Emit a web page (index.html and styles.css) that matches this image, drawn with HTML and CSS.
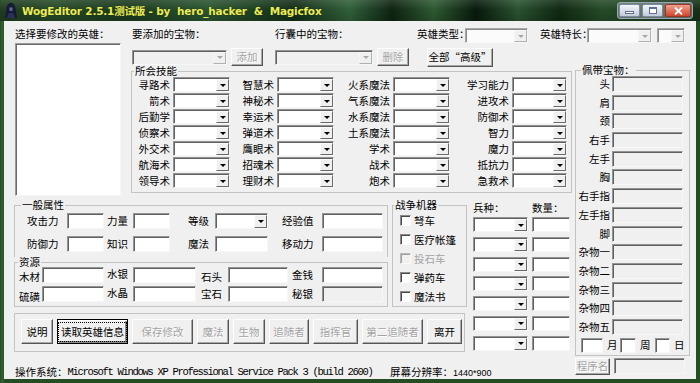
FILE: index.html
```html
<!DOCTYPE html>
<html lang="zh-CN">
<head>
<meta charset="utf-8">
<title>WogEditor</title>
<link rel="stylesheet" href="styles.css">
</head>
<body>
<div class="window">
  <div class="titlebar">
    <svg class="appicon" width="16" height="17" viewBox="0 0 16 17">
      <path d="M8 1C5.2 1 3.6 3.6 3.4 7.2L2 16h12l-1.4-8.8C12.4 3.6 10.8 1 8 1z" fill="#161a34"/>
      <path d="M6.2 5.5h3.6l-.4 3.4H6.6z" fill="#5d6690"/>
      <path d="M4 16l1.5-5h5l1.5 5z" fill="#2a3058"/>
    </svg>
    <span class="title">WogEditor 2.5.1测试版 - by  hero_hacker  &amp;  Magicfox</span>
    <div class="capbtns">
      <span class="cap"><span class="ico-min"></span></span>
      <span class="cap"><span class="ico-max"></span></span>
      <span class="cap close">
        <svg width="9" height="8" viewBox="0 0 9 8"><path d="M1 0.5l7 7M8 0.5l-7 7" stroke="#fff" stroke-width="1.8"/></svg>
      </span>
    </div>
  </div>

  <div class="client">
    <div class="row1">
      <span class="lab l1">选择要修改的英雄：</span>
      <span class="lab l2">要添加的宝物：</span>
      <span class="lab l3">行囊中的宝物：</span>
      <span class="lab l4">英雄类型：</span>
      <div class="cb off w63"><i></i></div>
      <span class="lab l5">英雄特长：</span>
      <div class="cb off w65"><i></i></div>
      <div class="cb off w28 ml5"><i></i></div>
    </div>

    <div class="main">
      <div class="leftreg">
        <div class="upper">
          <div class="listbox"></div>
          <div class="center">
            <div class="addrow">
              <div class="cb dis w95 ml1"><i></i></div>
              <span class="btn dis w32 ml4 h18">添加</span>
              <div class="cb dis w98 ml12"><i></i></div>
              <span class="btn dis w32 ml4 h18">删除</span>
              <span class="btn w66 ml18 h19">全部“高级”</span>
            </div>
            <fieldset class="grp skills">
              <legend class="lg-skills">所会技能</legend>
              <div class="skillgrid">
                <span class="sl">寻路术</span><div class="cb"><i></i></div>
                <span class="sl">智慧术</span><div class="cb"><i></i></div>
                <span class="sl">火系魔法</span><div class="cb"><i></i></div>
                <span class="sl">学习能力</span><div class="cb"><i></i></div>

                <span class="sl">箭术</span><div class="cb"><i></i></div>
                <span class="sl">神秘术</span><div class="cb"><i></i></div>
                <span class="sl">气系魔法</span><div class="cb"><i></i></div>
                <span class="sl">进攻术</span><div class="cb"><i></i></div>

                <span class="sl">后勤学</span><div class="cb"><i></i></div>
                <span class="sl">幸运术</span><div class="cb"><i></i></div>
                <span class="sl">水系魔法</span><div class="cb"><i></i></div>
                <span class="sl">防御术</span><div class="cb"><i></i></div>

                <span class="sl">侦察术</span><div class="cb"><i></i></div>
                <span class="sl">弹道术</span><div class="cb"><i></i></div>
                <span class="sl">土系魔法</span><div class="cb"><i></i></div>
                <span class="sl">智力</span><div class="cb"><i></i></div>

                <span class="sl">外交术</span><div class="cb"><i></i></div>
                <span class="sl">鹰眼术</span><div class="cb"><i></i></div>
                <span class="sl">学术</span><div class="cb"><i></i></div>
                <span class="sl">魔力</span><div class="cb"><i></i></div>

                <span class="sl">航海术</span><div class="cb"><i></i></div>
                <span class="sl">招魂术</span><div class="cb"><i></i></div>
                <span class="sl">战术</span><div class="cb"><i></i></div>
                <span class="sl">抵抗力</span><div class="cb"><i></i></div>

                <span class="sl">领导术</span><div class="cb"><i></i></div>
                <span class="sl">理财术</span><div class="cb"><i></i></div>
                <span class="sl">炮术</span><div class="cb"><i></i></div>
                <span class="sl">急救术</span><div class="cb"><i></i></div>
              </div>
            </fieldset>
          </div>
        </div>

        <div class="lower">
          <div class="genres">
            <fieldset class="grp general">
              <legend class="lg-gen">一般属性</legend>
              <div class="gengrid">
                <span class="gl">攻击力</span><div class="tb"></div>
                <span class="gl p3">力量</span><div class="tb"></div>
                <span class="gl p18">等级</span><div class="cb h16"><i></i></div>
                <span class="gl p14">经验值</span><div class="tb"></div>

                <span class="gl">防御力</span><div class="tb"></div>
                <span class="gl p3">知识</span><div class="tb"></div>
                <span class="gl p18">魔法</span><div class="tb"></div>
                <span class="gl p14">移动力</span><div class="tb"></div>
              </div>
            </fieldset>
            <fieldset class="grp res">
              <legend class="lg-res">资源</legend>
              <div class="resgrid">
                <span class="rl first">木材</span><div class="tb"></div>
                <span class="rl p3 top">水银</span><div class="tb"></div>
                <span class="rl p5 low">石头</span><div class="tb"></div>
                <span class="rl p4">金钱</span><div class="tb"></div>

                <span class="rl bot">硫磺</span><div class="tb"></div>
                <span class="rl p3 top">水晶</span><div class="tb"></div>
                <span class="rl p5">宝石</span><div class="tb"></div>
                <span class="rl p4">秘银</span><div class="tb ro"></div>
              </div>
            </fieldset>
          </div>

          <fieldset class="grp war">
            <legend class="lg-war">战争机器</legend>
            <div class="warlist">
              <div class="wrow"><span class="chk"></span><span class="wl">弩车</span></div>
              <div class="wrow"><span class="chk"></span><span class="wl">医疗帐篷</span></div>
              <div class="wrow dis"><span class="chk"></span><span class="wl">投石车</span></div>
              <div class="wrow"><span class="chk"></span><span class="wl">弹药车</span></div>
              <div class="wrow"><span class="chk"></span><span class="wl">魔法书</span></div>
            </div>
          </fieldset>

          <div class="troops">
            <div class="thead"><span class="th1">兵种：</span><span>数量：</span></div>
            <div class="tgrid">
              <div class="cb"><i></i></div><div class="tb"></div>
              <div class="cb"><i></i></div><div class="tb"></div>
              <div class="cb"><i></i></div><div class="tb"></div>
              <div class="cb"><i></i></div><div class="tb"></div>
              <div class="cb"><i></i></div><div class="tb"></div>
              <div class="cb"><i></i></div><div class="tb"></div>
              <div class="cb"><i></i></div><div class="tb"></div>
            </div>
          </div>

          <div class="btnbox">
            <span class="btn bb w32">说明</span>
            <span class="btn bb def w71"><span class="focus">读取英雄信息</span></span>
            <span class="btn bb dis w61">保存修改</span>
            <span class="btn bb dis w32">魔法</span>
            <span class="btn bb dis w32">生物</span>
            <span class="btn bb dis w40">追随者</span>
            <span class="btn bb dis w45">指挥官</span>
            <span class="btn bb dis w61">第二追随者</span>
            <span class="btn bb w35">离开</span>
          </div>
        </div>

        <div class="status">
          <span class="os"><span>操作系统：</span><span class="mono">Microsoft Windows XP Professional Service Pack 3 (build 2600)</span></span>
          <span class="scr">屏幕分辨率：<span class="num">1440*900</span></span>
        </div>
      </div>

      <div class="rightreg">
        <fieldset class="grp equip">
          <legend class="lg-eq">佩带宝物：</legend>
          <div class="eqgrid">
            <span class="el">头</span><div class="tb ro"></div>
            <span class="el">肩</span><div class="tb ro"></div>
            <span class="el">颈</span><div class="tb ro"></div>
            <span class="el">右手</span><div class="tb ro"></div>
            <span class="el">左手</span><div class="tb ro"></div>
            <span class="el">胸</span><div class="tb ro"></div>
            <span class="el">右手指</span><div class="tb ro"></div>
            <span class="el">左手指</span><div class="tb ro"></div>
            <span class="el">脚</span><div class="tb ro"></div>
            <span class="el">杂物一</span><div class="tb ro"></div>
            <span class="el">杂物二</span><div class="tb ro"></div>
            <span class="el">杂物三</span><div class="tb ro"></div>
            <span class="el">杂物四</span><div class="tb ro"></div>
            <span class="el">杂物五</span><div class="tb ro"></div>
          </div>
          <div class="daterow">
            <div class="tb d1"></div><span class="dl">月</span>
            <div class="tb d2"></div><span class="dl">周</span>
            <div class="tb d3"></div><span class="dl">日</span>
          </div>
        </fieldset>
        <div class="progrow">
          <span class="btn dis prog">程序名</span>
          <div class="tb ro progtb"></div>
        </div>
      </div>
    </div>
  </div>
</div>
</body>
</html>
```
FILE: styles.css
```css
* { box-sizing: border-box; }
body {
  margin: 0;
  background: #ffffff;
  font-family: "Noto Sans CJK SC", "Noto Sans", sans-serif;
  font-size: 10.5px;
  line-height: 12px;
  color: #000;
}
.window {
  width: 700px;
  height: 383px;
  display: flex;
  flex-direction: column;
  background: linear-gradient(90deg, #244d24, #356535 3px, #244d24 4px);
  overflow: hidden;
}

/* ---------- title bar ---------- */
.titlebar {
  height: 21px;
  flex: none;
  display: flex;
  align-items: center;
  background:
    linear-gradient(180deg, rgba(255,255,255,0.12), rgba(255,255,255,0) 45%, rgba(0,0,0,0.15)),
    linear-gradient(90deg, #203c20 0%, #264a27 8%, #1c3a1f 18%, #2a5530 30%, #142e18 42%, #31603a 50%, #0e2412 56%, #2e5a32 62%, #081a0c 68%, #2a5230 74%, #0f2812 80%, #264c28 86%, #163018 100%);
  border-radius: 5px 5px 0 0;
}
.appicon { margin-left: 3px; flex: none; }
.title {
  margin-left: 3px;
  white-space: pre;
  color: #ecec58;
  font-family: "DejaVu Sans", "Noto Sans CJK SC", sans-serif;
  font-weight: bold;
  font-size: 10.5px;
  letter-spacing: -0.2px;
  text-shadow: 0 0 1px #1a2a10;
}
.capbtns {
  margin-left: auto;
  margin-right: 7px;
  display: flex;
  gap: 2px;
  padding: 1px;
  border: 1px solid #9aa6b8;
  border-radius: 3px;
  background: rgba(220,226,236,0.35);
}
.cap {
  width: 21px;
  height: 13px;
  border: 1px solid #7c8aa4;
  border-radius: 2px;
  background: linear-gradient(#f3f5f9, #c3cbd9);
  display: flex;
  align-items: center;
  justify-content: center;
}
.cap.close {
  width: 26px;
  border-color: #9c3424;
  background: linear-gradient(#f2a08e, #d0462e);
}
.ico-min { width: 9px; height: 3px; border: 1px solid #5f6f90; margin-top: 4px; background: #fff; }
.ico-max { width: 8px; height: 7px; border: 1px solid #5f6f90; border-top-width: 2px; background: #fff; }

/* ---------- client ---------- */
.client {
  flex: 1;
  margin: 0 4px 4px;
  background: #f0f0f0;
  padding: 7px 0 0 10px;
  display: flex;
  flex-direction: column;
}
.row1 { display: flex; height: 15px; padding-left: 1px; }
.row1 .lab { white-space: nowrap; flex: none; }
.l1 { width: 117px; }
.l2 { width: 143px; }
.l3 { width: 142px; }
.l4 { width: 48px; }
.l5 { width: 47px; margin-left: 12px; }

.main { display: grid; grid-template-columns: 558px 115px; column-gap: 3px; }
.leftreg { display: flex; flex-direction: column; }
.upper { display: flex; }
.listbox {
  margin-left: 1px;
  width: 106px;
  height: 153px;
  background: #fff;
  border: 1px solid;
  border-color: #9a9a9a #f6f6f6 #f6f6f6 #9a9a9a;
  box-shadow: inset 1px 1px 0 #6a6a6a;
}
.center { margin-left: 10px; width: 441px; display: flex; flex-direction: column; }
.addrow { display: flex; align-items: center; margin-top: 5px; height: 18px; }

/* ---------- controls ---------- */
.cb {
  height: 15px;
  background: #fff;
  border: 1px solid;
  border-color: #949494 #f7f7f7 #f7f7f7 #949494;
  box-shadow: inset 1px 1px 0 #606060;
  display: flex;
  justify-content: flex-end;
  padding: 1px 0 0 1px;
  flex: none;
}
.cb i {
  width: 13px;
  height: 100%;
  background: #f0f0f0;
  border: 1px solid;
  border-color: #fbfbfb #6a6a6a #6a6a6a #fbfbfb;
  display: flex;
  align-items: center;
  justify-content: center;
}
.cb i::after {
  content: "";
  border-left: 3px solid transparent;
  border-right: 3px solid transparent;
  border-top: 3px solid #000;
}
.cb.dis { background: #f0f0f0; }
.cb.dis i, .cb.off i { border-color: #f6f6f6 #b0b0b0 #b0b0b0 #f6f6f6; }
.cb.dis i::after, .cb.off i::after { border-top-color: #a8a8a8; }
.cb.off { background: #fbfbfb; border-color: #a8a8a8 #f7f7f7 #f7f7f7 #a8a8a8; box-shadow: inset 1px 1px 0 #8a8a8a; }
.cb.h16 { height: 16px; }

.tb {
  height: 16px;
  background: #fff;
  border: 1px solid;
  border-color: #949494 #f7f7f7 #f7f7f7 #949494;
  box-shadow: inset 1px 1px 0 #606060;
}
.tb.ro { background: #f0f0f0; }

.btn {
  height: 18px;
  background: #f0f0f0;
  border: 1px solid;
  border-color: #fdfdfd #555 #555 #fdfdfd;
  box-shadow: inset -1px -1px 0 #a8a8a8;
  display: flex;
  align-items: center;
  justify-content: center;
  white-space: nowrap;
  flex: none;
}
.btn.dis { color: #a4a4a4; text-shadow: 1px 1px 0 #fff; }
.btn.def {
  border-color: #000;
  box-shadow: inset 1px 1px 0 #fdfdfd, inset -2px -2px 0 #8a8a8a;
}
.btn .focus { border: 1px dotted #000; padding: 3px 2px; line-height: 12px; }

.w28 { width: 28px; } .w32 { width: 32px; } .w35 { width: 35px; } .w40 { width: 40px; }
.w45 { width: 45px; } .w61 { width: 61px; } .w63 { width: 63px; } .w65 { width: 65px; }
.w66 { width: 66px; } .w71 { width: 71px; } .w95 { width: 95px; } .w98 { width: 98px; }
.ml1 { margin-left: 1px; } .ml4 { margin-left: 4px; } .ml5 { margin-left: 5px; }
.ml12 { margin-left: 12px; } .ml18 { margin-left: 18px; }
.h18 { height: 18px; } .h19 { height: 19px; }

/* ---------- group boxes ---------- */
.grp {
  margin: 0;
  padding: 0;
  min-width: 0;
  border: 1px solid #c3c3c3;
}
.grp legend { padding: 0 1px; line-height: 12px; }
.lg-skills { margin-left: 2px; }
.lg-gen { margin-left: 6px; }
.grp .lg-res { margin-left: 3px; line-height: 10px; }
.lg-war { margin-left: 1px; }
.lg-eq { margin-left: 5px; }

.skills { margin-top: -1px; width: 441px; padding-bottom: 4px; }
.skillgrid {
  display: grid;
  grid-template-columns: 39px 57px 43px 57px 55px 57px 58px 55px;
  grid-auto-rows: 15px;
  column-gap: 2px;
  row-gap: 1px;
}
.sl { text-align: right; line-height: 15px; padding-right: 1px; white-space: nowrap; }

.lower {
  margin-top: 3px;
  display: grid;
  grid-template-columns: 374px 4px 75px 6px 97px;
  grid-template-rows: 108px 45px;
}
.genres { grid-column: 1; grid-row: 1; display: flex; flex-direction: column; }
.general { border-bottom: none; height: 58px; }
.gengrid {
  display: grid;
  grid-template-columns: 40px 37px 29px 37px 45px 53px 54px 61px;
  grid-auto-rows: 16px;
  row-gap: 7px;
  padding: 2px 0 0 12px;
}
.gl { line-height: 16px; white-space: nowrap; }
.p3 { padding-left: 3px; } .p4 { padding-left: 4px; } .p5 { padding-left: 5px; }
.p14 { padding-left: 14px; } .p18 { padding-left: 18px; }
.res { height: 50px; }
.resgrid {
  display: grid;
  grid-template-columns: 23px 62px 29px 63px 32px 60px 34px 61px;
  grid-auto-rows: 16px;
  row-gap: 3px;
  padding-left: 4px;
}
.rl { line-height: 16px; white-space: nowrap; }
.rl.top { line-height: 12px; padding-top: 1px; }
.rl.first { line-height: 12px; padding-top: 4px; }
.rl.bot { line-height: 12px; padding-top: 5px; }
.rl.low { padding-top: 2px; }

.war { grid-column: 3; grid-row: 1; height: 108px; }
.warlist { display: grid; grid-auto-rows: 19px; }
.wrow { display: flex; align-items: center; padding-left: 7px; }
.chk {
  width: 11px;
  height: 11px;
  background: #fff;
  border: 1px solid;
  border-color: #8a8a8a #fafafa #fafafa #8a8a8a;
  box-shadow: inset 1px 1px 0 #4a4a4a;
  flex: none;
}
.wl { margin-left: 3px; white-space: nowrap; }
.wrow.dis { color: #a4a4a4; }
.wrow.dis .chk { background: #f0f0f0; border-color: #b8b8b8 #fafafa #fafafa #b8b8b8; box-shadow: inset 1px 1px 0 #a0a0a0; }

.troops { grid-column: 5; grid-row: 1 / span 2; display: flex; flex-direction: column; }
.thead { display: flex; margin-top: 3px; height: 12px; white-space: nowrap; }
.th1 { width: 59px; }
.tgrid {
  margin-top: 3px;
  display: grid;
  grid-template-columns: 55px 38px;
  column-gap: 4px;
  grid-auto-rows: 15px;
  row-gap: 4.8px;
}
.tgrid .tb { height: 15px; }

.btnbox {
  grid-column: 1 / 4;
  grid-row: 2;
  margin-top: 6px;
  width: 451px;
  height: 39px;
  border: 1px solid #c3c3c3;
  display: flex;
  gap: 4px;
  padding: 5px 0 0 6px;
}
.btn.bb { height: 25px; }

.status {
  margin-top: 14px;
  display: grid;
  grid-template-columns: 375px auto;
  padding-left: 1px;
  line-height: 12px;
  white-space: nowrap;
}
.os { display: flex; }
.mono {
  font-family: "Liberation Mono", "DejaVu Sans Mono", monospace;
  font-size: 10.5px;
  letter-spacing: -1.3px;
}
.num { font-family: "Liberation Sans", sans-serif; font-size: 9px; }

/* ---------- right region ---------- */
.rightreg { display: flex; flex-direction: column; }
.equip { margin-top: 21px; width: 115px; padding-bottom: 2px; }
.eqgrid {
  display: grid;
  grid-template-columns: 35px 71px;
  column-gap: 1px;
  grid-auto-rows: 16px;
  row-gap: 2.7px;
}
.el { text-align: right; line-height: 16px; white-space: nowrap; padding-right: 1px; }
.daterow { display: flex; align-items: center; margin-top: 3px; height: 15px; }
.daterow .tb { height: 15px; }
.d1 { width: 22px; margin-left: 5px; }
.d2 { width: 16px; margin-left: 2px; }
.d3 { width: 15px; margin-left: 4px; }
.dl { margin-left: 4px; width: 11px; }
.progrow { display: flex; margin-top: 2px; align-items: flex-start; }
.prog { width: 35px; height: 17px; }
.progtb { width: 71px; margin-left: 4px; }
```
